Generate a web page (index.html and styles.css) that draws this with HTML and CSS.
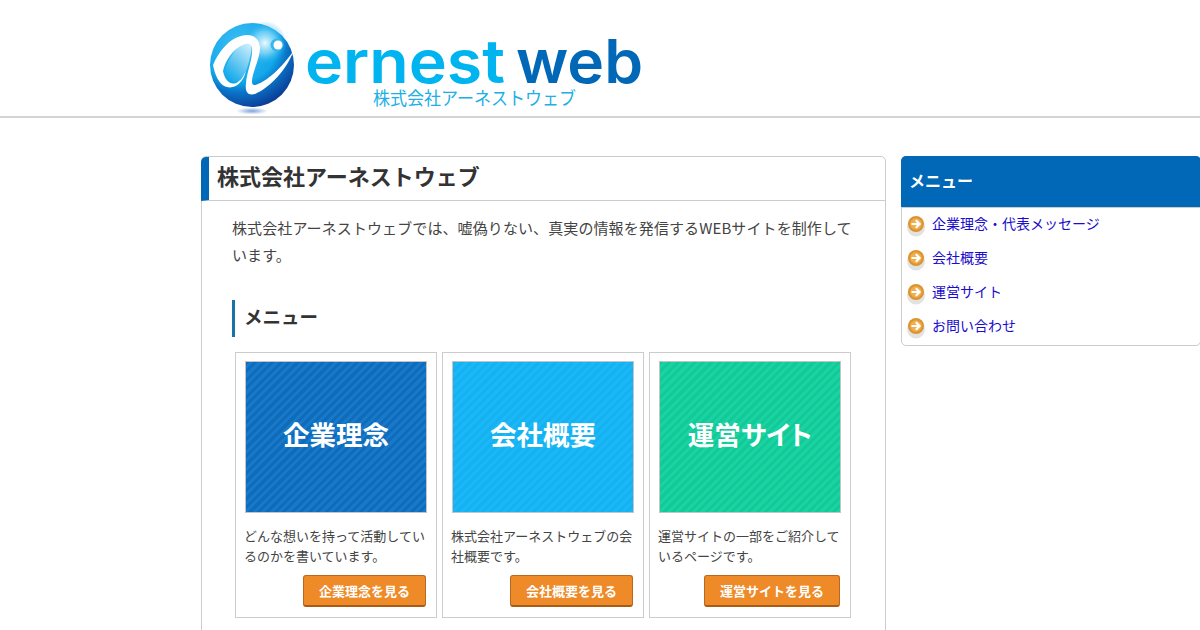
FILE: index.html
```html
<!DOCTYPE html>
<html lang="ja">

<head>
    <meta charset="UTF-8">
    <meta name="viewport" content="width=device-width, initial-scale=1.0">
    <title>株式会社アーネストウェブ</title>
    <link rel="stylesheet" href="styles.css">
</head>

<body>

    <header class="site-header">
        <a class="logo" href="#">
            <svg class="logo-svg" width="445" height="100" viewBox="0 0 445 100">
                <defs>
                    <radialGradient id="ball" cx="0.35" cy="0.25" r="0.9">
                        <stop offset="0" stop-color="#3dbdf3"/>
                        <stop offset="0.5" stop-color="#12a8ea"/>
                        <stop offset="0.64" stop-color="#0a74c8"/>
                        <stop offset="0.88" stop-color="#0b3a94"/>
                    </radialGradient>
                    <radialGradient id="glow">
                        <stop offset="0" stop-color="#eefaff"/>
                        <stop offset="0.5" stop-color="#8fdcf9" stop-opacity="0.7"/>
                        <stop offset="1" stop-color="#12a8ea" stop-opacity="0"/>
                    </radialGradient>
                    <linearGradient id="loop" x1="0.8" y1="0" x2="0.2" y2="1">
                        <stop offset="0" stop-color="#c8ecfb"/>
                        <stop offset="1" stop-color="#0aa5ea"/>
                    </linearGradient>
                    <radialGradient id="shade">
                        <stop offset="0" stop-color="#7fa3d8"/>
                        <stop offset="1" stop-color="#ffffff"/>
                    </radialGradient>
                </defs>
                <circle cx="47" cy="50" r="42" fill="url(#ball)"/>
                <circle cx="60" cy="28" r="22" fill="url(#glow)"/>
                <path d="M20 56C24 42 32 30 40 28C47 26 47 32 46 38C44 48 42 54 41 56C38 64 30 70 24 66C20 64 19 60 20 56Z" fill="url(#loop)"/>
                <path d="M8 50C14 36 24 24 36 21C46 18 54 22 55 32C55 42 50 52 48 60C46 68 47 70 50 70C60 68 78 52 89 35C82 54 66 72 50 79C42 81 40 76 41 68C42 56 48 44 47 33C46 28 42 28 38 30C28 34 20 46 18 56C20 67 28 72 34 66C37 64 39 60 41 56C38 68 30 74 22 72C14 70 10 60 8 50Z" fill="#fff"/>
                <circle cx="72" cy="30" r="6.5" fill="#35b4ee"/>
                <circle cx="73" cy="30" r="4.5" fill="#fff"/>
                <ellipse cx="47" cy="96" rx="16" ry="3.5" fill="url(#shade)"/>
                <text class="logo-word" x="100" y="68" textLength="200" lengthAdjust="spacingAndGlyphs" fill="#00b4f0">ernest</text>
                <text class="logo-word" x="311" y="68" textLength="127" lengthAdjust="spacingAndGlyphs" fill="#0068b7">web</text>
                <text class="logo-sub" x="168" y="90" textLength="203" lengthAdjust="spacingAndGlyphs" fill="#20aee6">株式会社アーネストウェブ</text>
            </svg>
        </a>
    </header>

    <div class="wrap">
        <main class="main-box">
            <h1 class="main-title">株式会社アーネストウェブ</h1>
            <div class="main-body">
                <p class="lead">株式会社アーネストウェブでは、嘘偽りない、真実の情報を発信するWEBサイトを制作しています。</p>
                <h2 class="sub-title">メニュー</h2>
                <div class="cards">
                    <section class="card">
                        <div class="thumb thumb-blue">企業理念</div>
                        <p class="card-text">どんな想いを持って活動しているのかを書いています。</p>
                        <div class="card-foot"><a class="btn" href="#">企業理念を見る</a></div>
                    </section>
                    <section class="card">
                        <div class="thumb thumb-sky">会社概要</div>
                        <p class="card-text">株式会社アーネストウェブの会社概要です。</p>
                        <div class="card-foot"><a class="btn" href="#">会社概要を見る</a></div>
                    </section>
                    <section class="card">
                        <div class="thumb thumb-green">運営サイト</div>
                        <p class="card-text">運営サイトの一部をご紹介しているページです。</p>
                        <div class="card-foot"><a class="btn" href="#">運営サイトを見る</a></div>
                    </section>
                </div>
            </div>
        </main>

        <aside class="side-box">
            <h2 class="side-title">メニュー</h2>
            <ul class="side-list">
                <li>
                    <svg class="arrow" width="18" height="22" viewBox="0 0 18 22"><ellipse cx="9" cy="12" rx="9" ry="9.5" fill="#e2e2e2"/><circle cx="9" cy="9" r="8" fill="#dd9430"/><circle cx="9" cy="9" r="5.8" fill="#eeb04e"/><path d="M4.5 9H12M8.8 5.2L12.6 9L8.8 12.8" fill="none" stroke="#fff" stroke-width="2.2"/></svg>
                    <a href="#">企業理念・代表メッセージ</a>
                </li>
                <li>
                    <svg class="arrow" width="18" height="22" viewBox="0 0 18 22"><ellipse cx="9" cy="12" rx="9" ry="9.5" fill="#e2e2e2"/><circle cx="9" cy="9" r="8" fill="#dd9430"/><circle cx="9" cy="9" r="5.8" fill="#eeb04e"/><path d="M4.5 9H12M8.8 5.2L12.6 9L8.8 12.8" fill="none" stroke="#fff" stroke-width="2.2"/></svg>
                    <a href="#">会社概要</a>
                </li>
                <li>
                    <svg class="arrow" width="18" height="22" viewBox="0 0 18 22"><ellipse cx="9" cy="12" rx="9" ry="9.5" fill="#e2e2e2"/><circle cx="9" cy="9" r="8" fill="#dd9430"/><circle cx="9" cy="9" r="5.8" fill="#eeb04e"/><path d="M4.5 9H12M8.8 5.2L12.6 9L8.8 12.8" fill="none" stroke="#fff" stroke-width="2.2"/></svg>
                    <a href="#">運営サイト</a>
                </li>
                <li>
                    <svg class="arrow" width="18" height="22" viewBox="0 0 18 22"><ellipse cx="9" cy="12" rx="9" ry="9.5" fill="#e2e2e2"/><circle cx="9" cy="9" r="8" fill="#dd9430"/><circle cx="9" cy="9" r="5.8" fill="#eeb04e"/><path d="M4.5 9H12M8.8 5.2L12.6 9L8.8 12.8" fill="none" stroke="#fff" stroke-width="2.2"/></svg>
                    <a href="#">お問い合わせ</a>
                </li>
            </ul>
        </aside>
    </div>

</body>

</html>
```

FILE: styles.css
```css
html, body {
    height: 630px;
    overflow: hidden;
}

body {
    margin: 0;
    background-color: #fff;
    color: #333;
    font-family: "Noto Sans CJK JP", "Noto Sans", sans-serif;
}

/* header */
.site-header {
    height: 116px;
    padding-left: 205px;
    border-bottom: 2px solid #d4d4d4;
    box-sizing: content-box;
}

.logo {
    display: block;
    padding-top: 15px;
}

.logo-svg {
    display: block;
}

.logo-word {
    font-family: "Inter", sans-serif;
    font-size: 60px;
    font-weight: 600;
}

.logo-sub {
    font-family: "Noto Sans CJK JP", sans-serif;
    font-size: 18px;
}

/* layout */
.wrap {
    display: flex;
    align-items: flex-start;
    gap: 15px;
    width: 1000px;
    margin: 38px 0 0 201px;
}

/* main column */
.main-box {
    width: 685px;
    flex: none;
    box-sizing: border-box;
    border: 1px solid #ccc;
    border-radius: 5px;
    padding-bottom: 40px;
}

.main-title {
    margin: 0;
    padding-left: 8px;
    height: 43px;
    line-height: 37px;
    font-size: 22px;
    font-weight: 700;
    border-left: 8px solid #0068b7;
    border-bottom: 1px solid #ccc;
    border-top-left-radius: 5px;
    margin-left: -1px;
}

.main-body {
    padding: 13px 28px 0 30px;
}

.lead {
    margin: 0;
    font-size: 15px;
    line-height: 27px;
    letter-spacing: 0.1px;
    color: #444;
}

.sub-title {
    margin: 32px 0 15px;
    padding-left: 9px;
    height: 37px;
    line-height: 33px;
    font-size: 18.5px;
    font-weight: 700;
    border-left: 3px solid #1773a8;
}

.cards {
    display: flex;
    gap: 5px;
    margin-left: 3px;
}

.card {
    width: 202px;
    height: 266px;
    flex: none;
    box-sizing: border-box;
    border: 1px solid #ccc;
    padding: 8px 10px 0 8px;
}

.thumb {
    display: flex;
    align-items: center;
    justify-content: center;
    width: 182px;
    height: 152px;
    margin-left: 1px;
    padding-bottom: 8px;
    box-sizing: border-box;
    border: 1px solid #c4c4c4;
    color: #fff;
    font-size: 26.5px;
    font-weight: 700;
}

.thumb-blue {
    background: repeating-linear-gradient(-45deg, #1879cb 0 3px, #0f6cba 3px 6px);
}

.thumb-sky {
    background: repeating-linear-gradient(-45deg, #1ab8f7 0 3px, #16b1f1 3px 6px);
}

.thumb-green {
    background: repeating-linear-gradient(-45deg, #1ad2a2 0 3px, #12c998 3px 6px);
    font-feature-settings: "palt";
}

.card-text {
    margin: 13px 0 0;
    font-size: 13px;
    line-height: 19.5px;
    height: 39px;
    color: #444;
}

.card-foot {
    display: flex;
    justify-content: flex-end;
    margin-top: 10px;
}

.btn {
    display: block;
    height: 32px;
    line-height: 29px;
    padding: 0 15px;
    box-sizing: border-box;
    background-color: #ee8a27;
    border: 1px solid #b8681f;
    border-bottom: 2px solid #a85a17;
    border-radius: 3px;
    color: #fff;
    font-size: 13px;
    font-weight: 700;
    text-decoration: none;
}

/* side column */
.side-box {
    width: 300px;
    flex: none;
    height: 190px;
    box-sizing: border-box;
    border: 1px solid #ccc;
    border-radius: 5px;
}

.side-title {
    margin: -1px -1px 0;
    height: 51px;
    line-height: 48px;
    padding-left: 8px;
    background-color: #0068b7;
    border-bottom: 1px solid #ccc;
    border-radius: 5px 5px 0 0;
    color: #fff;
    font-size: 16px;
    font-weight: 700;
}

.side-list {
    list-style: none;
    margin: -2px 0 0;
    padding: 0 0 0 5px;
}

.side-list li {
    display: flex;
    align-items: center;
    gap: 7px;
    height: 34px;
    font-size: 14px;
}

.side-list a {
    color: #1a0dcc;
    text-decoration: none;
}

.arrow {
    flex: none;
    margin-top: 5px;
}
```
